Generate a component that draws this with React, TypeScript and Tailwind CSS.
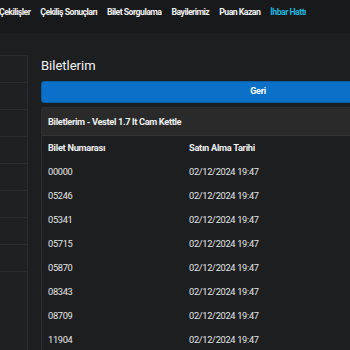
import React from "react";

const navItems = ["Çekilişler", "Çekiliş Sonuçları", "Bilet Sorgulama", "Bayilerimiz", "Puan Kazan"];

const tickets = ["00000", "05246", "05341", "05715", "05870", "08343", "08709", "11904"];

export default function App() {
  return (
    <div className="w-[350px] h-[350px] overflow-hidden bg-[#1d1e20] text-white font-['Roboto',sans-serif]">
      {/* üst menü */}
      <nav className="h-[33px] bg-[#18191b] flex items-center pb-[7px] gap-[10px] -ml-[1px] text-[8.75px] tracking-[-0.55px] font-bold whitespace-nowrap">
        {navItems.map((item) => (
          <span key={item} className="text-[#f1f1f1]">
            {item}
          </span>
        ))}
        <span className="text-[#1eb4dc]">İhbar Hattı</span>
      </nav>

      <div className="flex">
        {/* yan menü */}
        <aside className="w-[28px] shrink-0 mt-[22px] border-y border-r border-[#2b2c2e] bg-[#1f2022]">
          {Array.from({ length: 9 }).map((_, i) => (
            <div key={i} className="h-[27px] border-b border-[#2b2c2e] last:border-b-0" />
          ))}
        </aside>

        {/* içerik */}
        <main className="ml-[13px] w-[434px] shrink-0">
          <h1 className="mt-[24px] text-[13px] leading-[18px] text-[#f4f4f4]">Biletlerim</h1>
          <button
            type="button"
            className="mt-[6px] w-full h-[22px] rounded-[3px] bg-[#0b70c8] border border-[#0a5ca4] text-[9px] tracking-[-0.3px] font-bold text-white"
          >
            Geri
          </button>
          <section className="mt-[4px] border border-[#2e2f31] rounded-[3px]">
            <header className="h-[28px] bg-[#2a2a2b] border-b border-[#333436] flex items-center px-[6px] text-[9.25px] tracking-[-0.35px] font-bold text-[#f0f0f0]">
              Biletlerim - Vestel 1.7 lt Cam Kettle
            </header>
            <div className="px-[6px] text-[9.25px] tracking-[-0.3px]">
              <div className="flex h-[24px] items-center font-bold text-[#f0f0f0]">
                <span className="w-[141px]">Bilet Numarası</span>
                <span>Satın Alma Tarihi</span>
              </div>
              {tickets.map((t) => (
                <div key={t} className="flex h-[24px] items-center text-[#e6e6e6]">
                  <span className="w-[141px]">{t}</span>
                  <span>02/12/2024 19:47</span>
                </div>
              ))}
            </div>
          </section>
        </main>
      </div>
    </div>
  );
}
